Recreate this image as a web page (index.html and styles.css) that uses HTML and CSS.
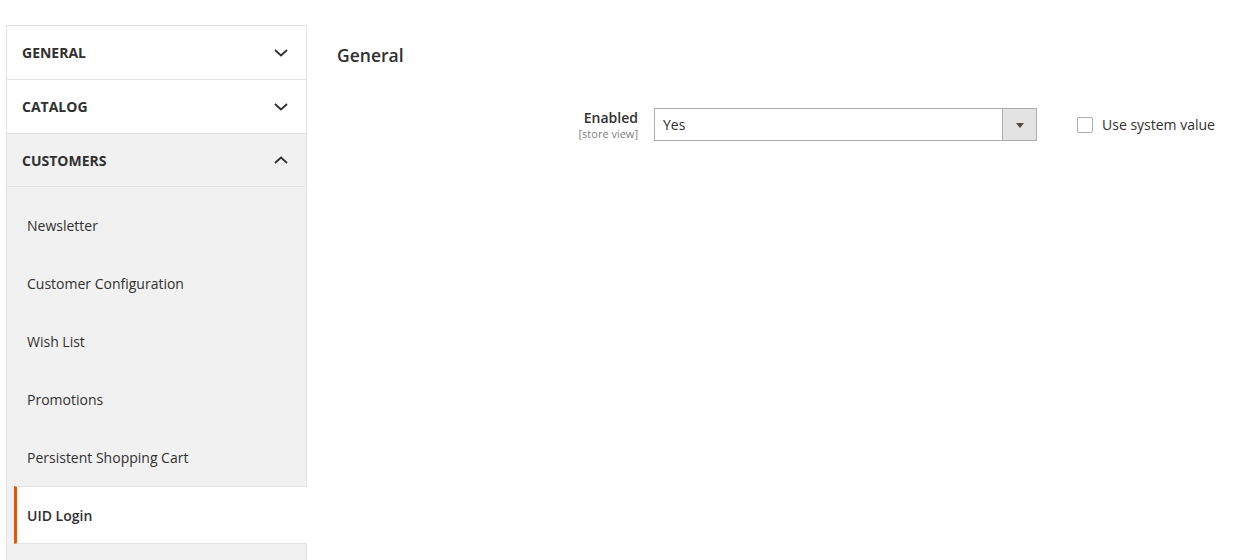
FILE: index.html
```html
<!DOCTYPE html>
<html lang="en">
<head>
<meta charset="utf-8">
<title>Configuration</title>
<link rel="stylesheet" href="styles.css">
</head>
<body>
<div class="page">
  <nav class="side-nav">
    <div class="nav-section">
      <div class="nav-title">
        <span>General</span>
        <svg class="chev" width="14" height="8" viewBox="0 0 14 8"><path d="M1 1 L7 6.5 L13 1" fill="none" stroke="#303030" stroke-width="1.8"/></svg>
      </div>
    </div>
    <div class="nav-section">
      <div class="nav-title">
        <span>Catalog</span>
        <svg class="chev" width="14" height="8" viewBox="0 0 14 8"><path d="M1 1 L7 6.5 L13 1" fill="none" stroke="#303030" stroke-width="1.8"/></svg>
      </div>
    </div>
    <div class="nav-section open">
      <div class="nav-title">
        <span>Customers</span>
        <svg class="chev" width="14" height="8" viewBox="0 0 14 8"><path d="M1 7 L7 1.5 L13 7" fill="none" stroke="#303030" stroke-width="1.8"/></svg>
      </div>
      <ul class="nav-items">
        <li class="nav-item">Newsletter</li>
        <li class="nav-item">Customer Configuration</li>
        <li class="nav-item">Wish List</li>
        <li class="nav-item">Promotions</li>
        <li class="nav-item">Persistent Shopping Cart</li>
        <li class="nav-item current">UID Login</li>
      </ul>
    </div>
    <div class="nav-section next"></div>
  </nav>
  <main class="content">
    <h2 class="section-title">General</h2>
    <div class="field">
      <div class="field-label">
        <span class="label-text">Enabled</span>
        <span class="scope">[store view]</span>
      </div>
      <div class="select">
        <span class="select-value">Yes</span>
        <span class="select-arrow"><span class="tri"></span></span>
      </div>
      <label class="use-default">
        <span class="checkbox"></span>
        <span>Use system value</span>
      </label>
    </div>
  </main>
</div>
</body>
</html>
```

FILE: styles.css
```css
* { box-sizing: border-box; }
html, body { margin: 0; padding: 0; background: #fff; }
body {
  font-family: "Open Sans", "Liberation Sans", sans-serif;
  color: #303030;
  font-size: 14px;
}
.page {
  display: flex;
  align-items: flex-start;
  padding: 25px 0 0 6px;
  height: 560px;
  overflow: hidden;
}
.side-nav {
  width: 301px;
  flex: none;
  border: 1px solid #e3e3e3;
  border-bottom: none;
}
.nav-section { border-bottom: 1px solid #e3e3e3; }
.nav-title {
  height: 53px;
  display: flex;
  align-items: center;
  justify-content: space-between;
  padding: 0 18px 0 15px;
  font-weight: 700;
  font-size: 14px;
  text-transform: uppercase;
}
.nav-section.open { background: #f1f1f1; }
.nav-section.open .nav-title { border-bottom: 1px solid #e3e3e3; }
.chev { display: block; }
.nav-items {
  list-style: none;
  margin: 0;
  padding: 9px 0 16px;
}
.nav-item {
  height: 58px;
  display: flex;
  align-items: center;
  padding-left: 20px;
  font-size: 14px;
}
.nav-item.current {
  background: #fff;
  margin-left: 7px;
  margin-right: -1px;
  padding-left: 10px;
  border-left: 3px solid #eb5202;
  border-top: 1px solid #e3e3e3;
  border-bottom: 1px solid #e3e3e3;
  font-weight: 600;
}
.nav-section.next { height: 40px; background: #f1f1f1; border-bottom: none; }
.content {
  flex: 1;
  padding-left: 30px;
}
.section-title {
  margin: 19px 0 0;
  font-size: 17.5px;
  line-height: 23px;
  font-weight: 600;
}
.field {
  display: flex;
  align-items: flex-start;
  margin-top: 41px;
}
.field-label {
  width: 301px;
  flex: none;
  display: flex;
  flex-direction: column;
  align-items: flex-end;
  padding-top: 1px;
}
.label-text {
  font-weight: 600;
  font-size: 14px;
  line-height: 18px;
}
.scope {
  font-size: 11px;
  line-height: 13px;
  color: #808080;
}
.select {
  margin-left: 16px;
  width: 383px;
  height: 33px;
  border: 1px solid #adadad;
  display: flex;
  align-items: stretch;
  flex: none;
}
.select-value {
  flex: 1;
  display: flex;
  align-items: center;
  padding-left: 8px;
  font-size: 14px;
}
.select-arrow {
  width: 34px;
  border-left: 1px solid #adadad;
  background: #e3e3e3;
  display: flex;
  align-items: center;
  justify-content: center;
}
.tri {
  width: 0;
  height: 0;
  border-left: 4px solid transparent;
  border-right: 4px solid transparent;
  border-top: 5px solid #514943;
  margin-top: 1px;
}
.use-default {
  margin-left: 40px;
  display: flex;
  align-items: center;
  gap: 9px;
  height: 33px;
  font-size: 14px;
}
.checkbox {
  width: 16px;
  height: 16px;
  border: 1px solid #adadad;
  border-radius: 2px;
  background: #fff;
}
```
